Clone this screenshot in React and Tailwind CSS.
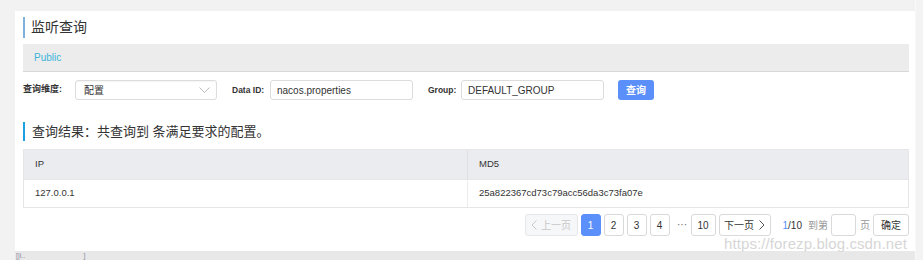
import React from "react";

const F = { fontFamily: '"Liberation Sans", "Noto Sans CJK SC", sans-serif' };

function PageBtn({ children, active, disabled, w = "w-[20px]", cls = "" }) {
  return (
    <div
      className={
        "h-[22px] shrink-0 flex items-center justify-center rounded-[3px] text-[10px] border " +
        w +
        " " +
        cls +
        " " +
        (active
          ? "bg-[#5b8ff9] border-[#5b8ff9] text-white"
          : disabled
          ? "bg-[#f6f7f9] border-[#e6e7eb] text-[#c8c8c8]"
          : "bg-white border-[#d9d9d9] text-[#333]")
      }
    >
      {children}
    </div>
  );
}

function Chev({ dir, color }) {
  return (
    <svg width="6" height="10" viewBox="0 0 6 10" fill="none">
      <path
        d={dir === "left" ? "M5.5 0.5 L1 5 L5.5 9.5" : "M0.5 0.5 L5 5 L0.5 9.5"}
        stroke={color}
        strokeWidth="1"
      />
    </svg>
  );
}

export default function App() {
  return (
    <div className="w-[923px] h-[260px] bg-[#f2f2f2] relative overflow-hidden" style={F}>
      <div className="flex h-full">
        <div className="w-[15px] shrink-0 bg-[#f2f2f2]" />
        <div className="w-[900px] shrink-0 flex flex-col">
          <div className="h-[11px] shrink-0 bg-[#f2f2f2]" />
          <div className="h-[240px] shrink-0 bg-white pl-[8px] pr-[6px] flex flex-col">
            <div className="mt-[6px] h-[21px] border-l-2 border-[#7fb0dc] pl-[6px] flex items-center text-[14px] text-[#333]">
              监听查询
            </div>
            <div className="mt-[6px] h-[28px] bg-[#ececec] border-b border-[#d8d8d8] pl-[11px] flex items-center text-[10px] text-[#3cb4db]">
              Public
            </div>
            <div className="mt-[8px] h-[20px] flex items-center text-[10px] text-[#333]">
              <div className="w-[52px] shrink-0 font-semibold text-[9px] whitespace-nowrap">查询维度:</div>
              <div className="w-[142px] shrink-0 h-[20px] border border-[#dcdcdc] rounded-[3px] pl-[8px] pr-[6px] flex items-center justify-between shadow-[inset_0_1px_1px_rgba(0,0,0,0.04)]">
                <span>配置</span>
                <svg width="11" height="7" viewBox="0 0 11 7" fill="none">
                  <path d="M0.5 0.5 L5.5 5.5 L10.5 0.5" stroke="#b5b5b5" strokeWidth="0.9" />
                </svg>
              </div>
              <div className="ml-[15px] w-[38px] shrink-0 font-semibold text-[8.5px] whitespace-nowrap">Data ID:</div>
              <div className="w-[143px] shrink-0 h-[20px] border border-[#dcdcdc] rounded-[3px] pl-[6px] flex items-center">
                nacos.properties
              </div>
              <div className="ml-[15px] w-[33px] shrink-0 font-semibold text-[8.5px] whitespace-nowrap">Group:</div>
              <div className="w-[143px] shrink-0 h-[20px] border border-[#dcdcdc] rounded-[3px] pl-[6px] flex items-center">
                DEFAULT_GROUP
              </div>
              <div className="ml-[14px] w-[36px] shrink-0 h-[20px] rounded-[3px] bg-[#5b8ff9] text-white flex items-center justify-center font-semibold">
                查询
              </div>
            </div>
            <div className="mt-[22px] h-[19px] border-l-2 border-[#1a9fe0] pl-[7px] flex items-center text-[13px] text-[#333]">
              查询结果：共查询到 条满足要求的配置。
            </div>
            <div className="mt-[8px] border border-[#e6e6e6] text-[9.5px] text-[#333]">
              <div className="h-[29px] bg-[#ebecf0] flex">
                <div className="w-[444px] pl-[11px] flex items-center border-r border-[#e0e0e0]">IP</div>
                <div className="flex-1 pl-[11px] flex items-center">MD5</div>
              </div>
              <div className="h-[28px] flex border-t border-[#e6e6e6]">
                <div className="w-[444px] pl-[11px] flex items-center border-r border-[#ececec]">127.0.0.1</div>
                <div className="flex-1 pl-[11px] flex items-center">25a822367cd73c79acc56da3c73fa07e</div>
              </div>
            </div>
            <div className="mt-[6px] flex justify-end items-center text-[10px] text-[#333]">
              <PageBtn disabled w="w-[53px]">
                <span className="mr-[4px] flex"><Chev dir="left" color="#c8c8c8" /></span>上一页
              </PageBtn>
              <PageBtn active cls="ml-[3px]">1</PageBtn>
              <PageBtn cls="ml-[3px]">2</PageBtn>
              <PageBtn cls="ml-[3px]">3</PageBtn>
              <PageBtn cls="ml-[3px]">4</PageBtn>
              <div className="ml-[6px] w-[13px] text-center text-[#666] leading-none">···</div>
              <PageBtn w="w-[25px]" cls="ml-[2px]">10</PageBtn>
              <PageBtn w="w-[52px]" cls="ml-[3px]">
                下一页<span className="ml-[5px] flex"><Chev dir="right" color="#555" /></span>
              </PageBtn>
              <div className="ml-[12px] whitespace-nowrap">
                <span className="text-[#5b8ff9]">1</span>/10
              </div>
              <div className="ml-[6px] text-[#999] whitespace-nowrap">到第</div>
              <div className="ml-[3px] w-[25px] h-[22px] shrink-0 border border-[#d9d9d9] rounded-[3px]" />
              <div className="ml-[4px] text-[#999]">页</div>
              <PageBtn w="w-[36px]" cls="ml-[3px]">确定</PageBtn>
            </div>
          </div>
          <div className="flex-1 bg-[#e8e8e8] pl-[1px] text-[7px] leading-[7px] text-[#8a8aa0] pt-[1px] overflow-hidden whitespace-nowrap">
            [|i..&nbsp;&nbsp;&nbsp;&nbsp;&nbsp;&nbsp;&nbsp;&nbsp;&nbsp;&nbsp;&nbsp;&nbsp;&nbsp;&nbsp;&nbsp;&nbsp;&nbsp;&nbsp;&nbsp;&nbsp;&nbsp;&nbsp;&nbsp;&nbsp;&nbsp;&nbsp;&nbsp;&nbsp;&nbsp;&nbsp;]
          </div>
        </div>
        <div className="flex-1 bg-[#f3f3f3] border-l border-[#f8f8f8]" />
      </div>
      <div
        className="absolute left-[724px] top-[233px] text-[15px] text-[#d6d6d6] tracking-[0.1px]"
        style={{ fontFamily: '"Liberation Sans", sans-serif', textShadow: "0 0 1px #fff" }}
      >
        https://forezp.blog.csdn.net
      </div>
    </div>
  );
}
